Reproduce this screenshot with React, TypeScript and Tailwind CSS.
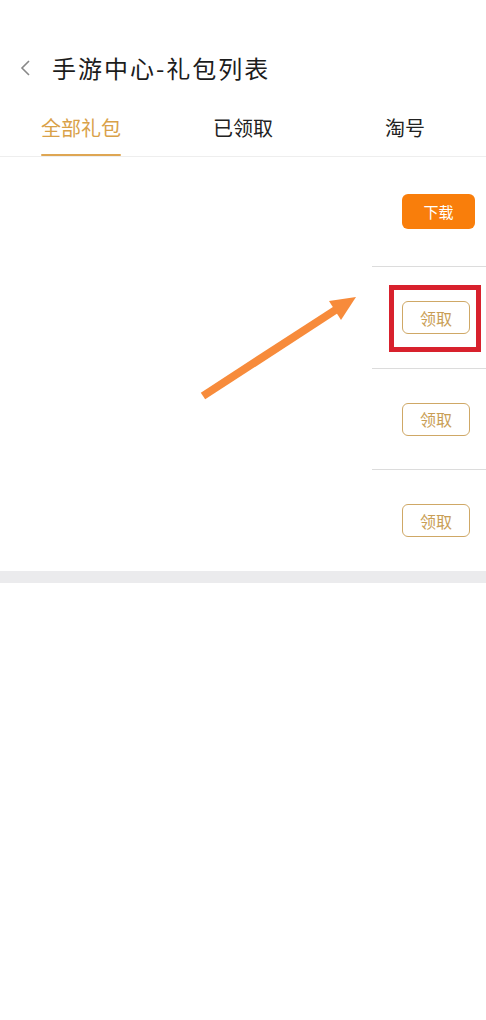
import React from 'react';

const tabs = ['全部礼包', '已领取', '淘号']

const Row = ({h, label, filled, last}: any) => {
    return (
        <div className="flex">
            <div className="flex-1"/>
            <div className={`w-[114px] flex items-center ${h} ${last ? '' : 'border-b border-[#dcdcdc]'}`}>
                {filled ? (
                    <button className="ml-[30px] w-[73px] h-[35px] rounded-[6px] bg-[#f97e0b] text-white text-[15px] leading-none">
                        {label}
                    </button>
                ) : (
                    <button className="ml-[30px] w-[68px] h-[33px] rounded-[6px] border-[1.5px] border-[#cfa866] text-[#c99e55] text-[16px] leading-none">
                        {label}
                    </button>
                )}
            </div>
        </div>
    )
}

const App = () => {
    return (
        <div className="relative w-[486px] min-h-[1020px] bg-white font-['Noto_Sans_CJK_SC',sans-serif]">
            <div className="h-[40px]"/>

            {/* header */}
            <div className="h-[56px] flex items-center">
                <svg className="ml-[18px] w-[14px] h-[20px]" viewBox="0 0 14 20">
                    <polyline points="11,3 4,10 11,17" fill="none" stroke="#888" strokeWidth="1.6"/>
                </svg>
                <h1 className="ml-[20px] text-[24px] tracking-[2px] text-[#1c1c1c] leading-none">手游中心-礼包列表</h1>
            </div>

            {/* tabs */}
            <div className="h-[61px] flex border-b border-[#eeeeee]">
                {tabs.map((t, i) => (
                    <div key={t} className="flex-1 flex justify-center">
                        <div className="flex flex-col items-center">
                            <span className={`pt-[18px] text-[20px] leading-[28px] ${i === 0 ? 'text-[#d9a148]' : 'text-[#222]'}`}>{t}</span>
                            <div className={`mt-[12px] h-[3px] w-full rounded-full ${i === 0 ? 'bg-[#dea653]' : ''}`}/>
                        </div>
                    </div>
                ))}
            </div>

            {/* list */}
            <Row h="h-[110px]" label="下载" filled/>
            <Row h="h-[102px]" label="领取"/>
            <Row h="h-[101px]" label="领取"/>
            <Row h="h-[101px]" label="领取" last/>
            <div className="h-[12px] bg-[#ebebed]"/>

            {/* annotations */}
            <div className="absolute left-[389px] top-[285px] w-[92px] h-[67px] border-[5px] border-[#d8212d]"/>
            <svg className="absolute left-0 top-0" width="486" height="1020" viewBox="0 0 486 1020">
                <line x1="203" y1="396" x2="337" y2="309" stroke="#f78b3b" strokeWidth="8"/>
                <polygon points="356,297 329,301 341,320" fill="#f78b3b"/>
            </svg>
        </div>
    );
};

export default App;
